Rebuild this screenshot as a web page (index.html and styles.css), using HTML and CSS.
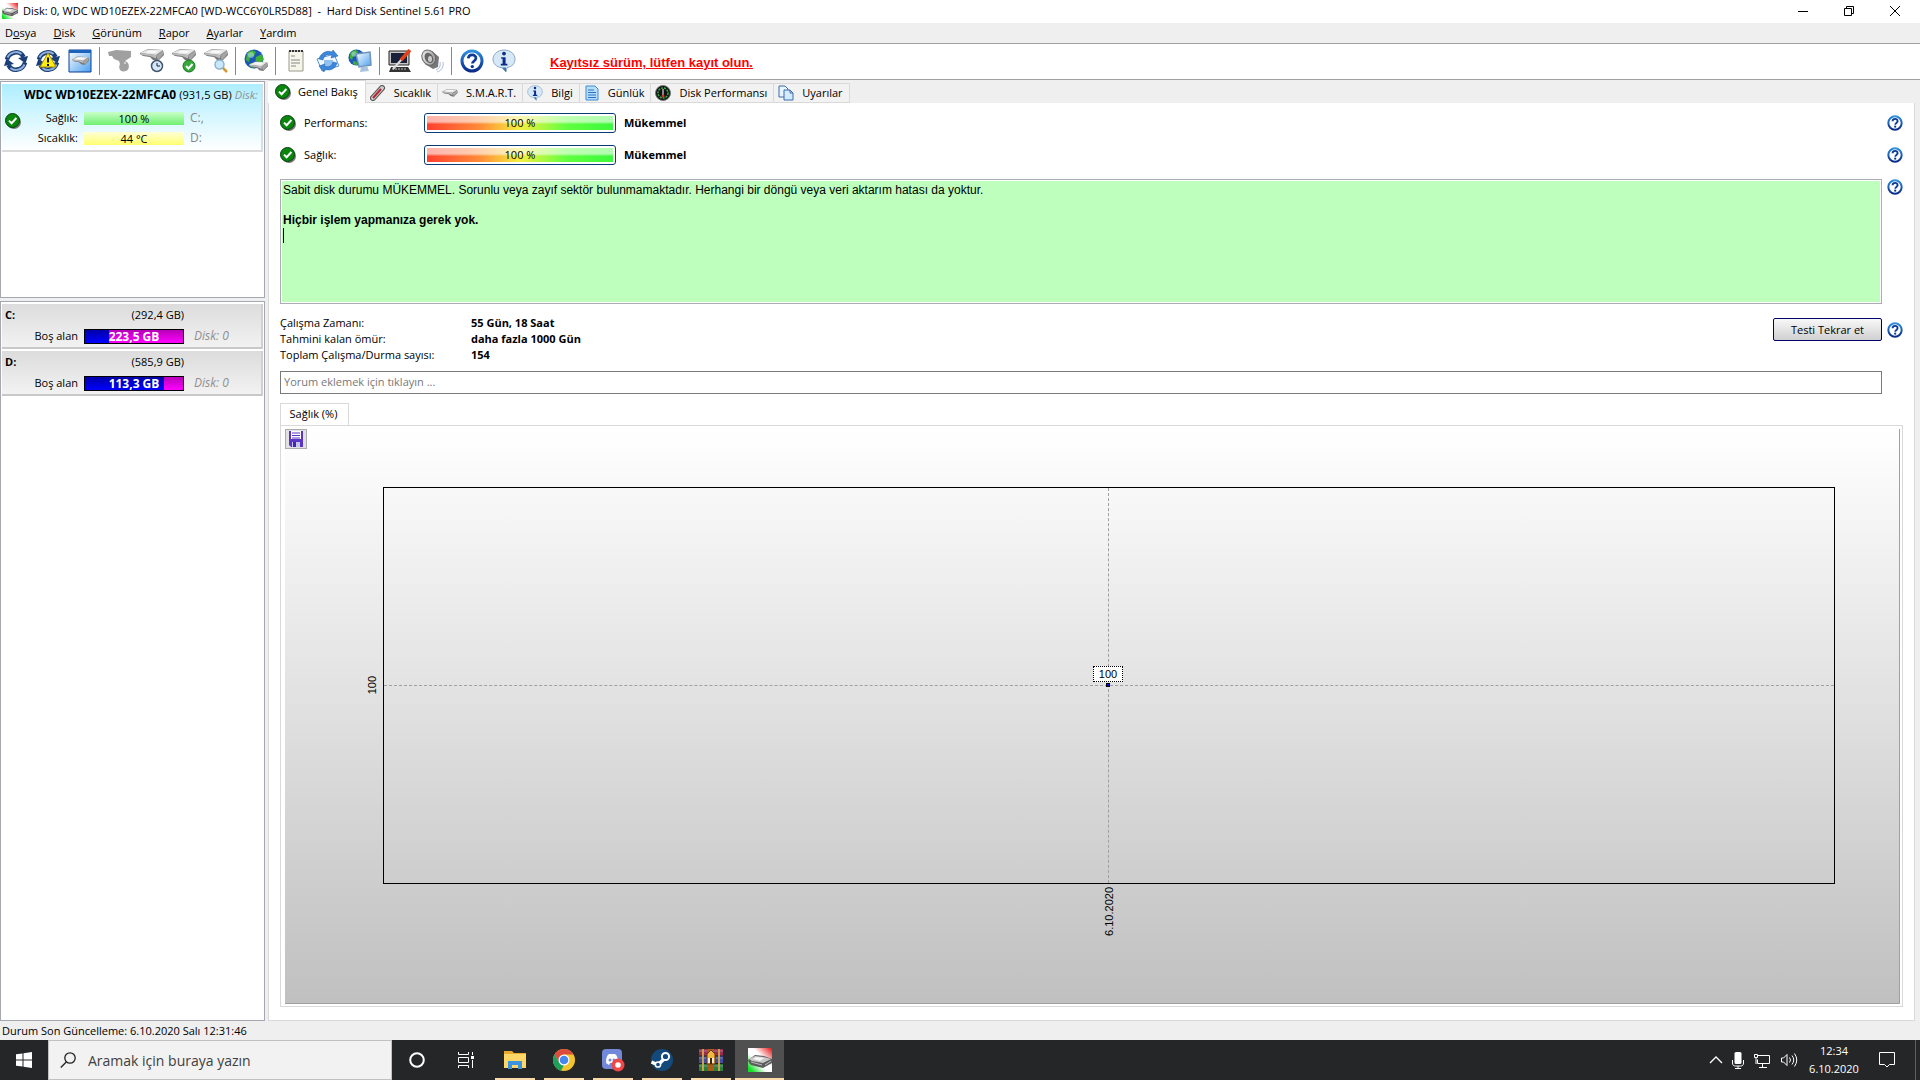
FILE: index.html
```html
<!DOCTYPE html>
<html lang="tr">
<head>
    <meta charset="UTF-8">
    <title>Hard Disk Sentinel</title>
    <link rel="stylesheet" href="styles.css">
</head>
<body>
    <svg class="defs" width="0" height="0" aria-hidden="true">
        <defs>
            <linearGradient id="blue" x1="0" y1="0" x2="0" y2="1"><stop offset="0" stop-color="#2f8fe0"/><stop offset="1" stop-color="#0a2c88"/></linearGradient>
            <linearGradient id="metal" x1="0" y1="0" x2="1" y2="1"><stop offset="0" stop-color="#f4f4f4"/><stop offset="1" stop-color="#909090"/></linearGradient>
            <linearGradient id="sky" x1="0" y1="0" x2="1" y2="1"><stop offset="0" stop-color="#ffffff"/><stop offset="1" stop-color="#4aa0f0"/></linearGradient>
            <linearGradient id="flag" x1="0" y1="1" x2="1" y2="0"><stop offset="0.1" stop-color="#14e028"/><stop offset="0.4" stop-color="#fff"/><stop offset="0.6" stop-color="#fff"/><stop offset="1" stop-color="#e81010"/></linearGradient>
            <symbol id="ok" viewBox="0 0 16 16"><circle cx="9" cy="9" r="7" fill="#777"/><circle cx="7.5" cy="7.5" r="7" fill="#0a860e" stroke="#04400a"/><path d="M4 7.6l2.6 2.6L11.4 5" fill="none" stroke="#fff" stroke-width="2"/></symbol>
            <symbol id="help" viewBox="0 0 24 24"><circle cx="12" cy="12" r="10" fill="#fff" stroke="url(#blue)" stroke-width="3"/><path d="M8.3 9.4c.2-4.6 7.8-4.6 7.6-.2-.1 2.7-3.5 2.8-3.5 5.4" fill="none" stroke="#0d3c98" stroke-width="2.7"/><circle cx="12.3" cy="17.6" r="1.7" fill="#0d3c98"/></symbol>
            <symbol id="info" viewBox="0 0 24 24"><path d="M12 1c6.500 0 11 4 11 9s-3 7.500-8 8.600L14 23l-4-4.200C4 18 1 14.500 1 10s4.500-9 11-9z" fill="#d6e8f6" stroke="#8ba8c4"/><path d="M14 18.500V23l-4-4.500z" fill="#3c74b4"/><circle cx="12" cy="4.600" r="1.900" fill="#0c2c88"/><path d="M9.200 8.200h4.400v6.600h1.800v1.600H8.800v-1.600h1.800v-5H9.200z" fill="#0c2c88"/></symbol>
            <symbol id="sync" viewBox="0 0 24 24"><path d="M3 10.500C5 2.500 16 .5 19.500 8M21 13.500c-2 8-13 10-16.500 2.500" fill="none" stroke="#1b3f78" stroke-width="4.500"/><path d="M3.500 8.500C6 3 13.500 1.500 17.500 5M20.500 15.500C18 21 10.500 22.500 6.500 19" fill="none" stroke="#8fb0d8" stroke-width="2"/><path d="M14 9l10-2-2.500 7.500zM10 15L0 17l2.500-7.500z" fill="#1b3f78"/></symbol>
            <symbol id="drive" viewBox="0 0 24 14"><path d="M0 4L8 0l15 1 1 5-6 6-5-1-3-3-7-1-3-2z" fill="#777"/><path d="M0 4L8 .5l15 .5-7 5z" fill="#e6e6e6"/><path d="M0 4l16 2v3.500L10 7 2 6z" fill="#bcbcbc"/><path d="M16 6.500l7-5v4l-5 6z" fill="#a4a4a4"/><path d="M5 3.200l5-1.700 8 .5-4 2.200z" fill="#fafafa"/></symbol>
            <symbol id="globe" viewBox="0 0 20 20"><circle cx="10" cy="10" r="9.500" fill="#1c58b8"/><path d="M3 4l5-3 4 2-2 4-4 1-1 5-3-2zM12 8l6-3 1.500 5-2 5-4-1-2-3zM6 14l4 1 1 4-5-1z" fill="#3fb035"/><circle cx="7" cy="6" r="3" fill="#bfe6ff" opacity=".5"/></symbol>
            <symbol id="save" viewBox="0 0 16 16"><path d="M1 0h14v16H3l-2-2z" fill="#5b35c4"/><path d="M3 0h10v8H3z" fill="#fff"/><path d="M4 2h8M4 4.500h8M4 7h8" stroke="#5b35c4"/><path d="M4 11h8v5H4z" fill="#c4c8e8"/><path d="M5 11h3v5H5z" fill="#4b22b0"/></symbol>
            <symbol id="hds" viewBox="0 0 24 24"><path d="M0 0h24v24H0z" fill="url(#flag)"/><path d="M0 12l7-5 9 1 8 3v4l-9 5-12-3-2-2z" fill="#5c5c5c"/><path d="M1 11l6-3 9 1 7 2-8 4-11-2z" fill="#c8c8c8"/><path d="M5 11l3-2 8 1-4 3z" fill="#f6f6f6"/><path d="M3 14l11 3M17 17l6-4" stroke="#bbb"/></symbol>
        </defs>
    </svg>

    <header class="titlebar">
        <svg class="icon16" viewBox="0 0 24 24"><use href="#hds"/></svg>
        <h1>Disk: 0, WDC WD10EZEX-22MFCA0 [WD-WCC6Y0LR5D88] &nbsp;-&nbsp; Hard Disk Sentinel 5.61 PRO</h1>
        <div class="window-buttons">
            <button aria-label="Simge durumuna küçült"><svg width="10" height="10"><path d="M0 5.500h10" stroke="#000"/></svg></button>
            <button aria-label="Geri yükle"><svg width="10" height="10"><path d="M.5 2.500h7v7h-7zM2.500 2V.5h7v7H8" fill="none" stroke="#000"/></svg></button>
            <button aria-label="Kapat"><svg width="10" height="10"><path d="M0 0l10 10M10 0L0 10" stroke="#000"/></svg></button>
        </div>
    </header>

    <nav class="menubar">
        <a href="#">D<u>o</u>sya</a>
        <a href="#"><u>D</u>isk</a>
        <a href="#"><u>G</u>örünüm</a>
        <a href="#"><u>R</u>apor</a>
        <a href="#"><u>A</u>yarlar</a>
        <a href="#"><u>Y</u>ardım</a>
    </nav>

    <div class="toolbar">
        <button aria-label="Yenile"><svg viewBox="0 0 24 24"><use href="#sync"/></svg></button>
        <button aria-label="Uyarıları yenile"><svg viewBox="0 0 24 24"><use href="#sync"/><path d="M12 4l8 14H4z" fill="#ffee10" stroke="#a89000"/><path d="M12 8.500v5M12 15v2" stroke="#111" stroke-width="2"/></svg></button>
        <button aria-label="Disk görünümü"><svg viewBox="0 0 24 24"><path d="M1 1h22v22H1z" fill="url(#sky)" stroke="#0b3f94"/><path d="M1 1h22v3H1z" fill="#1b62bd"/><use href="#drive" x="4" y="7" width="17" height="11"/></svg></button>
        <span class="sep"></span>
        <button aria-label="Test" disabled><svg viewBox="0 0 24 24"><path d="M0 3l8-2 15 1v6l-6 4c5 1 5 9 1 10-6 2-8-3-6-7l-1-3-5-2-2-3H1z" fill="#a0a0a0"/><path d="M17 13v2" stroke="#fff"/></svg></button>
        <button aria-label="Zamanlı test"><svg viewBox="0 0 24 24"><use href="#drive" width="24" height="14"/><circle cx="17" cy="17" r="5.500" fill="#d5e8fa" stroke="#44566a" stroke-width="1.500"/><path d="M17 14v3h3" fill="none" stroke="#123"/></svg></button>
        <button aria-label="Disk onayla"><svg viewBox="0 0 24 24"><use href="#drive" width="24" height="14"/><circle cx="17" cy="17" r="6" fill="#35a93c" stroke="#187320"/><path d="M14 17l2.500 2.500L20.500 15" fill="none" stroke="#fff" stroke-width="2"/></svg></button>
        <button aria-label="Yüzey testi"><svg viewBox="0 0 24 24"><use href="#drive" width="24" height="14"/><path d="M18 18l5 5" stroke="#d49a38" stroke-width="2.500"/><circle cx="15.500" cy="15.500" r="4.500" fill="#c9e8fc" stroke="#8cb4d0" stroke-width="1.500"/></svg></button>
        <span class="sep"></span>
        <button aria-label="Ağ diski"><svg viewBox="0 0 24 24"><use href="#globe" x="0" y="0" width="20" height="20"/><use href="#drive" x="5" y="12" width="19" height="12"/></svg></button>
        <span class="sep"></span>
        <button aria-label="Rapor"><svg viewBox="0 0 24 24"><path d="M5 2h14v20H5z" fill="#f5f5ea" stroke="#9a9a90"/><path d="M5 2h14" stroke="#333" stroke-width="2" stroke-dasharray="2 1"/><path d="M7 7h4M7 11h9M7 14h9M7 17h5" stroke="#888"/></svg></button>
        <button aria-label="E-posta gönder"><svg viewBox="0 0 24 24"><path d="M1 10l17-5 5 12-17 5z" fill="#eef6ff" stroke="#5a94cc"/><path d="M8 11h9v8H8z" fill="#8fc0ef"/><path d="M3 10C5 3 12 1 16 3l1-2 5 6-7 2 1-3c-5-1-8 0-9 5zM21 14c-2 7-8 8-12 6l-1 3-5-6 6-2-1 2c5 2 8 0 9-4z" fill="#3b87dc" stroke="#1c5aa8" stroke-width=".5"/></svg></button>
        <button aria-label="Ağ durumu"><svg viewBox="0 0 24 24"><use href="#globe" width="17" height="17"/><path d="M8 5l14-2 1 13-12 2z" fill="url(#sky)" stroke="#6e94b8" stroke-width="1.500"/><path d="M13 18l6-1 2 5-9 1z" fill="#a9c4dd"/></svg></button>
        <span class="sep"></span>
        <button aria-label="Ayarlar"><svg viewBox="0 0 24 24"><path d="M1 2h20v14H1z" fill="#c7c7c0" stroke="#222"/><path d="M3 4h16v10H3z" fill="#18203a"/><path d="M3 18h17l3 5H1z" fill="#333"/><path d="M4 20h14" stroke="#bbb" stroke-dasharray="2 1"/><path d="M5 20L14 10" stroke="#ddd" stroke-width="2"/><path d="M13 11L22 1" stroke="#e0431a" stroke-width="3.500"/></svg></button>
        <button aria-label="Ses"><svg viewBox="0 0 24 24"><path d="M12 2l7 6-1 10-5 2-8-5z" fill="#777"/><ellipse cx="9" cy="8.500" rx="6.500" ry="8" transform="rotate(-30 9 9)" fill="url(#metal)" stroke="#666"/><ellipse cx="9" cy="9" rx="4" ry="5.500" transform="rotate(-30 9 9)" fill="#666"/><ellipse cx="10" cy="10" rx="2" ry="3" fill="#ccc"/><path d="M20 13c1 4-1 7-4 8M23 13c1 5-2 9-6 10" fill="none" stroke="#a9b9d5"/></svg></button>
        <span class="sep"></span>
        <button aria-label="Yardım"><svg viewBox="0 0 24 24"><use href="#help"/></svg></button>
        <button aria-label="Hakkında"><svg viewBox="0 0 24 24"><use href="#info"/></svg></button>
        <a class="register" href="#">Kayıtsız sürüm, lütfen kayıt olun.</a>
    </div>

    <div class="workspace">
        <aside class="sidebar">
            <section class="panel disks">
                <div class="disk-card">
                    <svg class="icon16 disk-ok" viewBox="0 0 16 16"><use href="#ok"/></svg>
                    <h2>WDC WD10EZEX-22MFCA0 <span>(931,5 GB)</span> <i>Disk:</i></h2>
                    <div class="disk-row"><span>Sağlık:</span><span class="meter green">100 %</span><span class="drive-letter">C:,</span></div>
                    <div class="disk-row"><span>Sıcaklık:</span><span class="meter yellow">44 °C</span><span class="drive-letter">D:</span></div>
                </div>
            </section>
            <section class="panel volumes">
                <div class="volume">
                    <div class="volume-head"><b>C:</b><span>(292,4 GB)</span></div>
                    <div class="volume-row"><span>Boş alan</span><span class="space"><span class="used" style="width: 24%"></span><b>223,5 GB</b></span><i>Disk: 0</i></div>
                </div>
                <div class="volume">
                    <div class="volume-head"><b>D:</b><span>(585,9 GB)</span></div>
                    <div class="volume-row"><span>Boş alan</span><span class="space"><span class="used" style="width: 81%"></span><b>113,3 GB</b></span><i>Disk: 0</i></div>
                </div>
            </section>
        </aside>

        <main class="content">
            <div class="tabs">
                <button class="tab active"><svg viewBox="0 0 16 16"><use href="#ok"/></svg>Genel Bakış</button>
                <button class="tab"><svg viewBox="0 0 16 16"><path d="M3 13L12 3" stroke="#555" stroke-width="6" stroke-linecap="round"/><path d="M3 13L12 3" stroke="#ccc" stroke-width="4" stroke-linecap="round"/><path d="M3 13L11 4" stroke="#b82434" stroke-width="2"/></svg>Sıcaklık</button>
                <button class="tab"><svg viewBox="0 0 16 16"><use href="#drive" x="0" y="4" width="16" height="9"/></svg>S.M.A.R.T.</button>
                <button class="tab"><svg viewBox="0 0 24 24"><use href="#info"/></svg>Bilgi</button>
                <button class="tab"><svg viewBox="0 0 16 16"><path d="M2 1h9l3 3v11H2z" fill="#b9defb" stroke="#3b8bd8"/><path d="M4 5h6M4 7.500h8M4 10h8M4 12.500h8" stroke="#2670c4"/></svg>Günlük</button>
                <button class="tab"><svg viewBox="0 0 16 16"><circle cx="8" cy="8" r="7.500" fill="#111" stroke="#777"/><circle cx="8" cy="8" r="5" fill="none" stroke="#38b048" stroke-width="1.500" stroke-dasharray="2 1"/><path d="M8 4v6" stroke="#fff"/><circle cx="8" cy="11" r="1.500" fill="#c33"/></svg>Disk Performansı</button>
                <button class="tab"><svg viewBox="0 0 16 16"><path d="M1 1h6l3 3v8H1z" fill="#e8f3ff" stroke="#3b6ca8"/><path d="M6 5h6l3 3v7H6z" fill="#d5e9ff" stroke="#3b6ca8"/><path d="M12 5v3h3" fill="none" stroke="#3b6ca8"/></svg>Uyarılar</button>
            </div>

            <div class="page">
                <div class="status-row">
                    <svg class="icon16" viewBox="0 0 16 16"><use href="#ok"/></svg>
                    <span class="status-label">Performans:</span>
                    <span class="gauge">100 %</span>
                    <b>Mükemmel</b>
                    <button class="help" aria-label="Yardım"><svg viewBox="0 0 24 24"><use href="#help"/></svg></button>
                </div>
                <div class="status-row">
                    <svg class="icon16" viewBox="0 0 16 16"><use href="#ok"/></svg>
                    <span class="status-label">Sağlık:</span>
                    <span class="gauge">100 %</span>
                    <b>Mükemmel</b>
                    <button class="help" aria-label="Yardım"><svg viewBox="0 0 24 24"><use href="#help"/></svg></button>
                </div>
                <div class="report-row">
                    <div class="report" role="textbox" aria-label="Disk durumu">
                        <p>Sabit disk durumu MÜKEMMEL. Sorunlu veya zayıf sektör bulunmamaktadır. Herhangi bir döngü veya veri aktarım hatası da yoktur.</p>
                        <p><b>Hiçbir işlem yapmanıza gerek yok.</b></p>
                        <span class="caret"></span>
                    </div>
                    <button class="help" aria-label="Yardım"><svg viewBox="0 0 24 24"><use href="#help"/></svg></button>
                </div>
                <div class="facts-row">
                    <table class="facts">
                        <tr><th scope="row">Çalışma Zamanı:</th><td>55 Gün, 18 Saat</td></tr>
                        <tr><th scope="row">Tahmini kalan ömür:</th><td>daha fazla 1000 Gün</td></tr>
                        <tr><th scope="row">Toplam Çalışma/Durma sayısı:</th><td>154</td></tr>
                    </table>
                    <div class="actions">
                        <button class="retest">Testi Tekrar et</button>
                        <button class="help" aria-label="Yardım"><svg viewBox="0 0 24 24"><use href="#help"/></svg></button>
                    </div>
                </div>
                <input class="comment" type="text" aria-label="Yorum" placeholder="Yorum eklemek için tıklayın ...">

                <div class="chart-tabs"><button class="chart-tab">Sağlık (%)</button></div>
                <div class="chart-pane">
                    <div class="chart">
                        <button class="save" aria-label="Kaydet"><svg width="16" height="16"><use href="#save"/></svg></button>
                        <div class="y-axis">100</div>
                        <div class="plot">
                            <span class="line-x"></span>
                            <span class="line-y"></span>
                            <span class="point"></span>
                            <span class="point-label">100</span>
                        </div>
                        <div class="x-axis">6.10.2020</div>
                    </div>
                </div>
            </div>
        </main>
    </div>

    <div class="statusbar">Durum Son Güncelleme: 6.10.2020 Salı 12:31:46</div>

    <footer class="taskbar">
        <button class="start" aria-label="Başlat"><svg width="16" height="16"><path d="M0 2.300L6.500 1.400v6.100H0zM7.500 1.200L16 0v7.500H7.500zM0 8.500h6.500v6.100L0 13.700zM7.500 8.500H16V16l-8.500-1.200z" fill="#fff"/></svg></button>
        <label class="search">
            <svg width="16" height="16"><circle cx="10" cy="6" r="5.200" fill="none" stroke="#222" stroke-width="1.300"/><path d="M6.500 9.800L.8 15.500" stroke="#222" stroke-width="1.300"/></svg>
            <input type="text" aria-label="Ara" placeholder="Aramak için buraya yazın">
        </label>
        <button class="task" aria-label="Cortana"><svg width="18" height="18"><circle cx="9" cy="9" r="6.800" fill="none" stroke="#fff" stroke-width="2"/></svg></button>
        <button class="task" aria-label="Görev görünümü"><svg width="16" height="16"><path d="M.5 0v2.500h10V0M.5 16v-2.500h10V16M.5 5.500h10v5H.5zM14.500 0v3M14.500 8v8" fill="none" stroke="#fff"/><path d="M13 4h3v3h-3z" fill="#fff"/></svg></button>
        <button class="task open" aria-label="Dosya Gezgini"><svg width="24" height="24"><path d="M1 3h8l2 2h12v15H1z" fill="#e9a92c"/><path d="M1 6h22v14H1z" fill="#ffd767"/><path d="M5 13h14v8h-4v-4H9v4H5z" fill="#3c93e0"/></svg></button>
        <button class="task open" aria-label="Chrome"><svg width="24" height="24"><circle cx="12" cy="12" r="11" fill="#f4c430"/><path d="M2.500 6.500a11 11 0 0 1 19 0H12L7 14z" fill="#dd4b3e"/><path d="M2.500 6.500l5.200 8.500 4.300 2-3 5.800A11 11 0 0 1 2.500 6.500z" fill="#1fa05a"/><circle cx="12" cy="12" r="5.500" fill="#fff"/><circle cx="12" cy="12" r="4.300" fill="#4688f1"/></svg></button>
        <button class="task open" aria-label="Discord"><svg width="24" height="24"><rect x="1" y="1" width="20" height="20" rx="4" fill="#7289da"/><path d="M5 15c0-5 1-8 3-9h6c2 1 3 4 3 9l-3 2-1-2H9l-1 2z" fill="#fff"/><circle cx="9" cy="12" r="1.500" fill="#7289da"/><circle cx="13" cy="12" r="1.500" fill="#7289da"/><circle cx="17" cy="17" r="6.500" fill="#f04747"/><circle cx="17" cy="17" r="2.800" fill="#fff"/></svg></button>
        <button class="task open" aria-label="Steam"><svg width="24" height="24"><circle cx="12" cy="12" r="11" fill="#14497c"/><path d="M1.500 14L8 17l8-8" fill="none" stroke="#fff" stroke-width="3.500"/><circle cx="15.500" cy="8.500" r="3.600" fill="#14497c" stroke="#fff" stroke-width="2"/><circle cx="8" cy="16.500" r="2.600" fill="#14497c" stroke="#fff" stroke-width="1.500"/></svg></button>
        <button class="task open" aria-label="WinRAR"><svg width="24" height="24"><path d="M0 1h24v7H0z" fill="#9c2c54"/><path d="M0 8h24v8H0z" fill="#3f4fa8"/><path d="M0 16h24v7H0z" fill="#2a7f3c"/><path d="M0 3h24M0 10h24M0 18h24" stroke="#c8b8d0" stroke-opacity=".5"/><path d="M0 8h24M0 15.500h24" stroke="#222"/><path d="M4 1v22M20 1v22" stroke="#c9a04c" stroke-width="2"/><path d="M9 1h6v22H9z" fill="#a85c18"/><path d="M8 16V6l4-4 4 4v10z" fill="#f0b840" stroke="#6b3e10"/><path d="M9 10h6v5H9z" fill="#f4ecd8"/><path d="M12 10v6" stroke="#432008" stroke-width="2"/></svg></button>
        <button class="task open current" aria-label="Hard Disk Sentinel"><svg width="24" height="24"><use href="#hds"/></svg></button>
        <div class="tray">
            <svg width="14" height="24"><path d="M1 15l6-6 6 6" fill="none" stroke="#fff" stroke-width="1.300"/></svg>
            <svg width="12" height="24"><rect x="2.500" y="4" width="7" height="12" rx="1.500" fill="#fff"/><path d="M.5 12v3c0 2 1 3 3 3h5c2 0 3-1 3-3v-3M6 18v2M3 20.500h6" fill="none" stroke="#fff"/></svg>
            <svg width="18" height="24"><path d="M5 7.500h11.500v8H4.500v-4M1.500 6.500h3v3h-3zM3 10v6M9.500 16v3M6 19.500h8" fill="none" stroke="#fff"/></svg>
            <svg width="18" height="24"><path d="M1.500 10h2L7 6.500v11L3.500 14h-2zM9.500 9.500q2 2.500 0 5M12 7.500q3.500 4.500 0 9M14.500 5.500q4.500 6.500 0 13" fill="none" stroke="#fff"/></svg>
        </div>
        <div class="clock"><span>12:34</span><span>6.10.2020</span></div>
        <button class="notify" aria-label="Bildirimler"><svg width="16" height="16"><path d="M.5.5h15v12h-5L8 15l-2.500-2.500h-5z" fill="none" stroke="#fff"/></svg></button>
    </footer>
</body>
</html>
```
FILE: styles.css
```css
* {
    box-sizing: border-box;
}
body {
    margin: 0;
    min-height: 100vh;
    display: flex;
    flex-direction: column;
    background: #efefef;
    color: #000;
    font-family: "Open Sans", "Noto Sans", sans-serif;
    font-size: 11px;
    line-height: 16px;
}
button {
    margin: 0;
    padding: 0;
    border: 0;
    background: none;
    color: inherit;
    font: inherit;
}
svg {
    display: block;
    flex: none;
}
h1, h2, p {
    margin: 0;
    font-size: inherit;
}
.defs {
    position: absolute;
}
.icon16 {
    width: 16px;
    height: 16px;
}

/* window chrome */
.titlebar {
    display: flex;
    align-items: center;
    height: 23px;
    padding: 0 2px 2px;
    gap: 5px;
    background: #fff;
}
.titlebar h1 {
    font-weight: normal;
}
.window-buttons {
    display: flex;
    margin-left: auto;
}
.window-buttons button {
    display: grid;
    place-items: center;
    width: 46px;
    height: 20px;
}
.menubar {
    display: flex;
    align-items: center;
    gap: 17px;
    height: 21px;
    padding-left: 5px;
    border-bottom: 1px solid #a0a0a0;
}
.menubar a {
    color: inherit;
    text-decoration: none;
}
.toolbar {
    display: flex;
    align-items: center;
    height: 36px;
    padding-bottom: 1px;
    background: #fff;
    border-bottom: 1px solid #a0a0a0;
}
.toolbar button {
    display: grid;
    place-items: center;
    width: 32px;
    height: 32px;
}
.toolbar svg {
    width: 24px;
    height: 24px;
}
.sep {
    width: 1px;
    height: 28px;
    margin: 0 4px 0 3px;
    background: #888;
}
.register {
    margin: 4px 0 0 30px;
    color: #f00;
    font: bold 13px/16px "Liberation Sans", sans-serif;
}

/* left side */
.workspace {
    flex: 1;
    display: flex;
    gap: 3px;
}
.sidebar {
    display: flex;
    flex-direction: column;
    gap: 3px;
    width: 265px;
    padding-top: 1px;
}
.panel {
    padding: 2px 1px;
    border: 1px solid #a5a8b0;
    background: #fff;
}
.disks {
    height: 217px;
}
.volumes {
    flex: 1;
}
.disk-card {
    position: relative;
    height: 68px;
    padding-top: 3px;
    border-right: 2px solid #d5dfe4;
    border-bottom: 2px solid #d9d9d9;
    background: linear-gradient(#adeeff, #fff);
}
.disk-ok {
    position: absolute;
    left: 3px;
    top: 29px;
}
.disk-card h2 {
    margin-bottom: 5px;
    padding-left: 22px;
    font-size: 12px;
    white-space: nowrap;
}
.disk-card h2 span,
.disk-card h2 i {
    font-size: 11px;
    font-weight: normal;
}
.disk-card i,
.volume i {
    color: #909090;
}
.disk-row,
.volume-row {
    display: grid;
    grid-template-columns: 76px 100px 1fr;
    align-items: center;
    column-gap: 6px;
    height: 20px;
}
.disk-row span:first-child,
.volume-row span:first-child {
    text-align: right;
}
.meter {
    height: 13px;
    line-height: 14px;
    text-align: center;
}
.green {
    background: linear-gradient(#c8ffc8, #70f070);
}
.yellow {
    background: linear-gradient(#ffffd8, #ffff70);
}
.drive-letter {
    color: #888;
    font-size: 12px;
}
.volume {
    height: 45px;
    margin-bottom: 2px;
    padding-top: 1px;
    border-right: 2px solid #d0d0d0;
    border-bottom: 2px solid #c8c8c8;
    background: linear-gradient(#dcdcdc, #f2f2f2);
}
.volume i {
    padding-left: 4px;
    font-size: 12px;
}
.volume-head {
    display: flex;
    justify-content: space-between;
    width: 182px;
    padding-left: 3px;
    height: 21px;
    line-height: 20px;
}
.space {
    position: relative;
    height: 15px;
    border: 1px solid #000;
    background: linear-gradient(#b800b8, #ff00ff);
    color: #fff;
    font-size: 12px;
    line-height: 14px;
    text-align: center;
}
.space b {
    position: relative;
}
.volume-row .used {
    position: absolute;
    left: 0;
    top: 0;
    bottom: 0;
    background: linear-gradient(#0000a8, #0000ff);
}

/* main tabs */
.content {
    flex: 1;
    display: flex;
    flex-direction: column;
    padding-right: 5px;
}
.tabs {
    display: flex;
    align-items: flex-end;
    height: 23px;
}
.tab {
    display: flex;
    align-items: center;
    gap: 8px;
    height: 20px;
    padding: 0 6px 0 4px;
    border: 1px solid #d9d9d9;
    border-left: 0;
    background: #f2f2f2;
}
.tab svg {
    width: 16px;
    height: 16px;
}
.tab.active {
    gap: 7px;
    height: 23px;
    padding: 0 7px;
    border-bottom: 0;
    background: #fff;
}
.page {
    flex: 1;
    display: flex;
    flex-direction: column;
    padding: 4px 11px 13px;
    border: 1px solid #d9d9d9;
    border-top: 0;
    background: #fff;
}
.status-row {
    display: flex;
    align-items: center;
    height: 32px;
}
.status-label {
    width: 128px;
    padding-left: 8px;
}
.gauge {
    width: 192px;
    height: 20px;
    margin-right: 8px;
    padding: 2px;
    border: 1px solid #0a3c78;
    border-radius: 3px;
    background: linear-gradient(rgba(255, 255, 255, 0.6) 40%, rgba(255, 255, 255, 0) 60%) content-box, linear-gradient(90deg, #ff4030, #ff8a38 28%, #f4f040 50%, #60ff40 75%, #3cf83c) content-box;
    line-height: 14px;
    text-align: center;
}
.help {
    width: 16px;
    height: 16px;
}
.help svg {
    width: 16px;
    height: 16px;
}
.status-row .help {
    margin-left: auto;
}
.report-row {
    display: flex;
    align-items: flex-start;
    gap: 5px;
    margin-top: 8px;
}
.report {
    flex: 1;
    height: 125px;
    padding: 3px 2px;
    border: 1px solid #abadb3;
    outline: 1px solid #fff;
    outline-offset: -2px;
    background: #beffbe;
    font: 12px/15px "Liberation Sans", sans-serif;
}
.report p {
    margin-bottom: 15px;
}
.report .caret {
    display: block;
    width: 1px;
    height: 15px;
    margin-top: -15px;
    background: #000;
}
.facts-row {
    display: flex;
    align-items: flex-start;
    justify-content: space-between;
    margin-top: 11px;
}
.facts {
    border-spacing: 0;
}
.facts th,
.facts td {
    padding: 0;
    text-align: left;
}
.facts th {
    width: 191px;
    font-weight: normal;
}
.facts td {
    font-weight: bold;
}
.actions {
    display: flex;
    align-items: center;
    gap: 5px;
    padding-top: 3px;
}
.retest {
    width: 109px;
    height: 23px;
    border: 1px solid #000068;
    border-radius: 2px;
    background: linear-gradient(#f8f8f8, #d0d0d0);
}
.comment {
    height: 23px;
    margin-top: 8px;
    margin-right: 21px;
    padding: 0 3px 2px;
    border: 1px solid #7a7a7a;
    font: inherit;
}
.comment::placeholder {
    color: #787878;
}

/* health chart */
.chart-tabs {
    display: flex;
    height: 22px;
    margin-top: 9px;
}
.chart-tab {
    width: 69px;
    padding: 0 2px 2px 0;
    border: 1px solid #d9d9d9;
    border-bottom: 0;
}
.chart-pane {
    flex: 1;
    display: flex;
    padding: 3px 2px 2px 4px;
    border: 1px solid #d9d9d9;
}
.chart {
    flex: 1;
    display: grid;
    grid-template-columns: 98px 1fr 64px;
    grid-template-rows: 58px 1fr 119px;
    border-right: 1px solid #a0a0a0;
    border-bottom: 1px solid #a0a0a0;
    background: linear-gradient(#fff, #c0c0c0);
    font-family: "Liberation Sans", sans-serif;
}
.save {
    display: grid;
    place-items: center;
    width: 22px;
    height: 20px;
    border: 1px solid #adadad;
    background: #e1e1e1;
}
.y-axis,
.x-axis {
    writing-mode: vertical-rl;
    transform: rotate(180deg);
}
.y-axis {
    grid-area: 2 / 1;
    justify-self: end;
    align-self: center;
    margin-right: 3px;
}
.x-axis {
    grid-area: 3 / 2;
    justify-self: center;
    align-self: start;
    margin-top: 3px;
}
.plot {
    grid-area: 2 / 2;
    position: relative;
    border: 1px solid #000;
}
.line-x,
.line-y,
.point,
.point-label {
    position: absolute;
    left: 50%;
    top: 50%;
}
.line-x {
    left: 0;
    right: 0;
    margin-top: -1px;
    border-top: 1px dashed #a0a0a0;
}
.line-y {
    top: 0;
    bottom: 0;
    margin-left: -1px;
    border-left: 1px dashed #a0a0a0;
}
.point {
    width: 4px;
    height: 4px;
    margin: -3px;
    border: 1px solid #000;
    background: #00f;
}
.point-label {
    width: 30px;
    height: 16px;
    margin: -20px 0 0 -16px;
    border: 1px dotted #000;
    background: #fff;
    line-height: 14px;
    text-align: center;
}

.statusbar {
    height: 19px;
    padding-left: 2px;
    line-height: 20px;
}

/* windows taskbar */
.taskbar {
    display: flex;
    align-items: stretch;
    height: 40px;
    background: #242628;
    color: #fff;
}
.taskbar button {
    display: grid;
    place-items: center;
}
.start {
    width: 48px;
}
.search {
    display: flex;
    align-items: center;
    gap: 12px;
    width: 344px;
    padding: 0 11px;
    border: 1px solid #c0c0c0;
    background: #f2f2f2;
}
.search input {
    flex: 1;
    padding: 2px 0 0;
    border: 0;
    background: none;
    font: 14px/20px "Open Sans", sans-serif;
}
.search input::placeholder {
    color: #404040;
}
.task {
    width: 49px;
}
.task.open {
    background: linear-gradient(#fbd9a8, #fbd9a8) center bottom / 40px 2px no-repeat;
}
.task.current {
    background: linear-gradient(#fbd9a8, #fbd9a8) center bottom / 100% 2px no-repeat, #505050;
}
.tray {
    display: flex;
    align-items: center;
    gap: 9px;
    margin-left: auto;
}
.clock {
    display: flex;
    flex-direction: column;
    justify-content: center;
    width: 72px;
    line-height: 18px;
    text-align: center;
}
.taskbar .notify {
    justify-items: end;
    width: 46px;
    padding-right: 20px;
    border-right: 1px solid #606060;
    margin-right: 4px;
}
```
